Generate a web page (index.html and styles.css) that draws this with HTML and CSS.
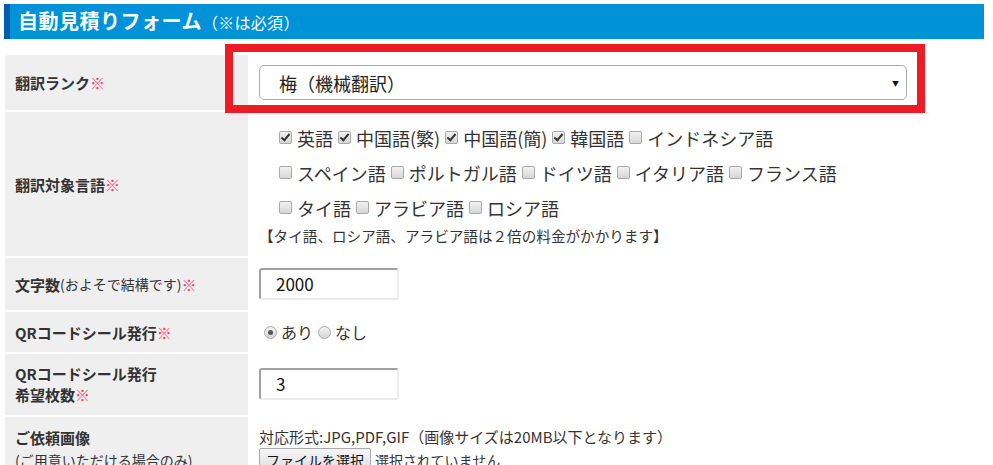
FILE: index.html
```html
<!DOCTYPE html>
<html lang="ja">
<head>
  <meta charset="UTF-8" />
  <meta name="viewport" content="width=device-width, initial-scale=1.0"/>
  <title>自動見積りフォーム</title>
  <link rel="stylesheet" href="styles.css">
</head>
<body>

  <div class="wrap">
    <h2 class="form-title">自動見積りフォーム<span class="note">（※は必須）</span></h2>

    <div class="form-table">
      <!-- 翻訳ランク -->
      <div class="row row-rank">
        <div class="label">翻訳ランク<span class="req">※</span></div>
        <div class="field">
          <div class="select">
            <span>梅（機械翻訳）</span>
            <span class="arrow">▼</span>
          </div>
          <div class="highlight"></div>
        </div>
      </div>

      <!-- 翻訳対象言語 -->
      <div class="row row-lang">
        <div class="label">翻訳対象言語<span class="req">※</span></div>
        <div class="field">
          <div class="langs">
            <div class="lang-line">
              <label class="chk-item"><span class="chk on"></span>英語</label>
              <label class="chk-item"><span class="chk on"></span>中国語(繁)</label>
              <label class="chk-item"><span class="chk on"></span>中国語(簡)</label>
              <label class="chk-item"><span class="chk on"></span>韓国語</label>
              <label class="chk-item"><span class="chk"></span>インドネシア語</label>
            </div>
            <div class="lang-line">
              <label class="chk-item"><span class="chk"></span>スペイン語</label>
              <label class="chk-item"><span class="chk"></span>ポルトガル語</label>
              <label class="chk-item"><span class="chk"></span>ドイツ語</label>
              <label class="chk-item"><span class="chk"></span>イタリア語</label>
              <label class="chk-item"><span class="chk"></span>フランス語</label>
            </div>
            <div class="lang-line">
              <label class="chk-item"><span class="chk"></span>タイ語</label>
              <label class="chk-item"><span class="chk"></span>アラビア語</label>
              <label class="chk-item"><span class="chk"></span>ロシア語</label>
            </div>
          </div>
          <p class="lang-note">【タイ語、ロシア語、アラビア語は２倍の料金がかかります】</p>
        </div>
      </div>

      <!-- 文字数 -->
      <div class="row row-input">
        <div class="label">文字数<span class="thin">(およそで結構です)</span><span class="req">※</span></div>
        <div class="field">
          <div class="text-input">2000</div>
        </div>
      </div>

      <!-- QRコードシール発行 -->
      <div class="row row-radio">
        <div class="label">QRコードシール発行<span class="req">※</span></div>
        <div class="field radios">
          <label class="radio-item"><span class="radio on"></span>あり</label>
          <label class="radio-item"><span class="radio"></span>なし</label>
        </div>
      </div>

      <!-- 希望枚数 -->
      <div class="row row-count">
        <div class="label two-line">QRコードシール発行<br>希望枚数<span class="req">※</span></div>
        <div class="field">
          <div class="text-input">3</div>
        </div>
      </div>

      <!-- ご依頼画像 -->
      <div class="row row-file">
        <div class="label file-label">ご依頼画像<span class="thin block">(ご用意いただける場合のみ)</span></div>
        <div class="field">
          <p class="file-note">対応形式:JPG,PDF,GIF（画像サイズは20MB以下となります）</p>
          <div class="file-line">
            <span class="file-btn">ファイルを選択</span>
            <span class="file-none">選択されていません</span>
          </div>
        </div>
      </div>
    </div>
  </div>

</body>
</html>
```

FILE: styles.css
```css
body {
  margin: 0;
  padding: 0;
  background-color: #fff;
  color: #333;
  font-family: "Noto Sans CJK JP", "Noto Sans", sans-serif;
  overflow: hidden;
}
.wrap {
  width: 980px;
  margin: 4px 0 0 4px;
}
.form-title {
  margin: 0;
  height: 35px;
  line-height: 34px;
  background-color: #0092d8;
  border-left: 6px solid #005cae;
  color: #fff;
  font-size: 20px;
  font-weight: bold;
  padding-left: 8px;
  letter-spacing: 0.5px;
}
.form-title .note {
  font-size: 16px;
  font-weight: normal;
  letter-spacing: 0.3px;
}
.form-table {
  margin: 16px 0 0 1px;
}
.row {
  display: flex;
  border-bottom: 2px solid #fff;
}
.label {
  width: 243px;
  flex-shrink: 0;
  box-sizing: border-box;
  background-color: #efefef;
  padding-left: 10px;
  display: flex;
  align-items: center;
  font-size: 15px;
  font-weight: bold;
  color: #333;
}
.req {
  color: #ff3d6e;
  font-weight: normal;
}
.thin {
  font-weight: normal;
  font-size: 14px;
}
.field {
  flex: 1;
  position: relative;
  padding-left: 11px;
  font-size: 14px;
}

/* 翻訳ランク */
.row-rank .field {
  padding-top: 10px;
  padding-bottom: 10px;
}
.select {
  width: 648px;
  height: 35px;
  box-sizing: border-box;
  border: 1px solid #aaa;
  border-radius: 5px;
  display: flex;
  align-items: center;
  justify-content: space-between;
  padding: 0 7px 0 19px;
  font-size: 18px;
  color: #222;
}
.select .arrow {
  font-size: 7px;
  color: #111;
}
.highlight {
  position: absolute;
  left: -23px;
  top: -11px;
  width: 700px;
  height: 69px;
  box-sizing: border-box;
  border: 8px solid #ed1c24;
}

/* 翻訳対象言語 */
.row-lang .field {
  padding-top: 8px;
  padding-bottom: 9px;
}
.langs {
  padding-left: 20px;
}
.lang-line {
  height: 35px;
  display: flex;
  align-items: center;
  font-size: 18px;
  color: #333;
}
.chk-item {
  display: inline-flex;
  align-items: center;
  margin-right: 5px;
}
.chk {
  width: 11px;
  height: 11px;
  border: 1px solid #a9a9a9;
  border-radius: 2px;
  background: linear-gradient(#f2f2f2, #d6d6d6);
  margin-right: 5px;
  position: relative;
}
.chk.on::after {
  content: "";
  position: absolute;
  left: 3px;
  top: 0px;
  width: 3px;
  height: 7px;
  border: solid #333;
  border-width: 0 2px 2px 0;
  transform: rotate(40deg);
}
.lang-note {
  margin: 0;
  line-height: 22px;
  font-size: 14.6px;
  color: #333;
}

/* 入力欄 */
.row-input .field {
  padding-top: 10px;
  padding-bottom: 10px;
}
.text-input {
  width: 140px;
  height: 32px;
  box-sizing: border-box;
  border: 2px solid #ececec;
  border-top-color: #a0a0a0;
  border-left-color: #a0a0a0;
  border-radius: 3px;
  padding-left: 15px;
  line-height: 28px;
  font-size: 17px;
  color: #111;
}

/* ラジオ */
.row-radio {
  height: 40px;
}
.radios {
  display: flex;
  align-items: center;
  padding-left: 16px;
  font-size: 16px;
}
.radio-item {
  display: inline-flex;
  align-items: center;
  margin-right: 5px;
}
.radio {
  width: 11px;
  height: 11px;
  border: 1px solid #a9a9a9;
  border-radius: 50%;
  background: linear-gradient(#f2f2f2, #d6d6d6);
  margin-right: 4px;
  position: relative;
}
.radio.on::after {
  content: "";
  position: absolute;
  left: 3px;
  top: 3px;
  width: 5px;
  height: 5px;
  border-radius: 50%;
  background-color: #555;
}

/* 希望枚数 */
.row-count .field {
  padding-top: 14px;
  padding-bottom: 15px;
}
.two-line {
  display: block;
  line-height: 21px;
  padding-top: 9px;
}

/* ご依頼画像 */
.row-file {
  height: 80px;
}
.file-label {
  display: block;
  padding-top: 10px;
  line-height: 22px;
}
.block {
  display: block;
}
.file-note {
  margin: 10px 0 0;
  line-height: 20px;
  font-size: 15px;
}
.file-line {
  display: flex;
  align-items: center;
  margin-top: 1px;
}
.file-btn {
  display: inline-block;
  border: 1px solid #aaa;
  border-radius: 2px;
  background: linear-gradient(#f6f6f6, #dedede);
  padding: 1px 6px;
  font-size: 14px;
  color: #111;
  margin-right: 4px;
}
.file-none {
  font-size: 14px;
}
```
